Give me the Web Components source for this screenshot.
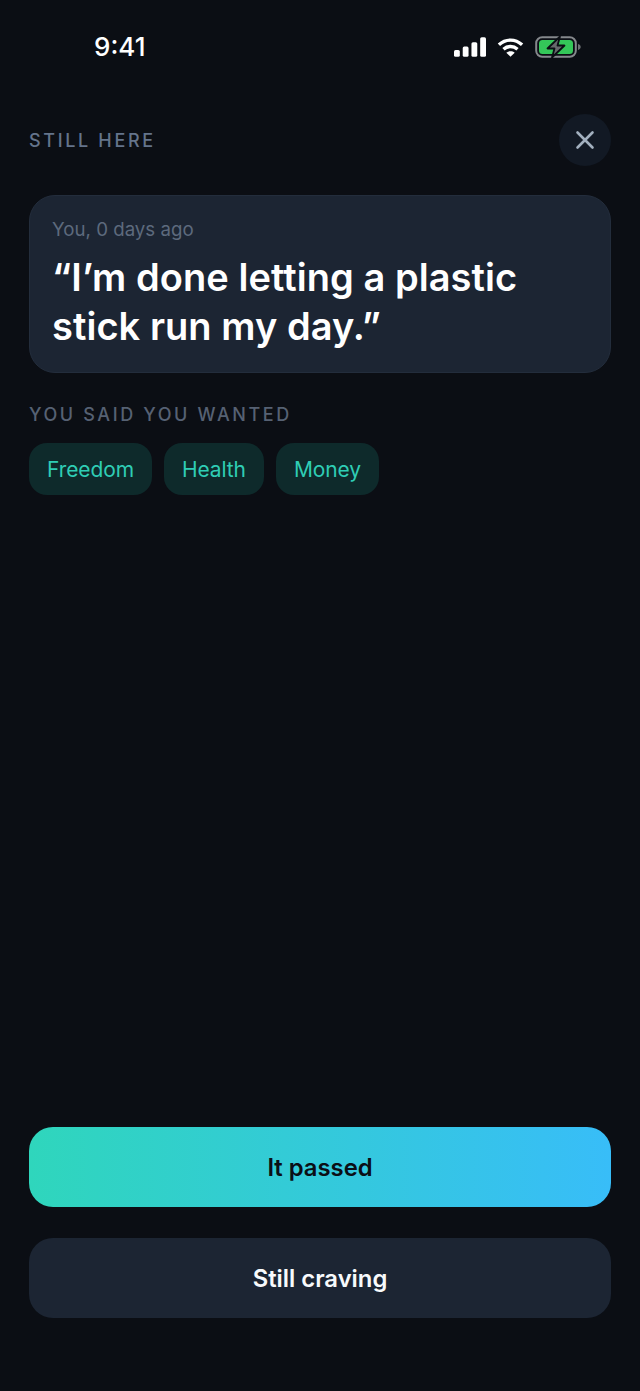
<!DOCTYPE html>
<html>
<head>
<meta charset="utf-8">
<style>
  html, body { margin: 0; height: 100%; background: #0b0e14; }
  body { font-family: Inter, "Liberation Sans", sans-serif; }
</style>
</head>
<body>
<craving-screen>
  <status-bar slot="status"></status-bar>
  <screen-header slot="header">STILL HERE</screen-header>
  <quote-card slot="content" meta="You, 0 days ago">“I’m done letting a plastic stick run my day.”</quote-card>
  <section-label slot="content">YOU SAID YOU WANTED</section-label>
  <chip-row slot="content">
    <goal-chip>Freedom</goal-chip>
    <goal-chip>Health</goal-chip>
    <goal-chip>Money</goal-chip>
  </chip-row>
  <action-button slot="actions" kind="primary">It passed</action-button>
  <action-button slot="actions">Still craving</action-button>
</craving-screen>

<script>
class CravingScreen extends HTMLElement {
  constructor() {
    super();
    this.attachShadow({ mode: 'open' }).innerHTML = `
      <style>
        :host { display: flex; flex-direction: column; height: 1391px; box-sizing: border-box; padding: 0 29px 73px; }
        .top { display: block; margin: 0 -29px; }
        main { flex: 1; display: flex; flex-direction: column; }
        .actions { display: flex; flex-direction: column; gap: 31px; }
      </style>
      <div class="top"><slot name="status"></slot></div>
      <slot name="header"></slot>
      <main><slot name="content"></slot></main>
      <div class="actions"><slot name="actions"></slot></div>`;
  }
}

class StatusBar extends HTMLElement {
  constructor() {
    super();
    this.attachShadow({ mode: 'open' }).innerHTML = `
      <style>
        :host { display: flex; align-items: center; justify-content: space-between; height: 94px; box-sizing: border-box; padding: 0 59px 0 94px; color: #fff; }
        .time { font-size: 26px; font-weight: 500; line-height: 1; }
        .icons { display: flex; align-items: center; gap: 11px; }
        svg { display: block; }
      </style>
      <span class="time">9:41</span>
      <div class="icons">
        <svg width="32" height="20" viewBox="0 0 33 20" fill="#fff">
          <rect x="0" y="13" width="6" height="7" rx="1.6"/>
          <rect x="9" y="9.5" width="6" height="10.5" rx="1.6"/>
          <rect x="18" y="5" width="6" height="15" rx="1.6"/>
          <rect x="27" y="0" width="6" height="20" rx="1.6"/>
        </svg>
        <svg width="27" height="19" viewBox="0 0 28 20" fill="none" stroke="#fff" stroke-width="3.6">
          <path d="M1.8 7.2C9 .6 19 .6 26.2 7.2"/>
          <path d="M6.6 11.8c4.4-3.8 10.400-3.800 14.800 0"/>
          <path d="M14 19.800l-4.400-4.400c2.500-2 6.300-2 8.800 0z" fill="#fff" stroke="none"/>
        </svg>
        <svg width="46" height="24" viewBox="0 0 46 24" fill="none">
          <rect x="1.200" y="2.200" width="39.600" height="19.600" rx="6" stroke="#85888c" stroke-width="2"/>
          <rect x="4" y="5" width="34" height="14" rx="3.500" fill="#34c759"/>
          <path d="M43 9v6c1.600-.4 2.700-1.600 2.700-3S44.600 9.400 43 9z" fill="#6e7175"/>
          <path d="M25 1.500L12.500 13.500h7L17 22.500 29.500 10.500h-7z" fill="#67696c" stroke="#0b0e14" stroke-width="1.800" stroke-linejoin="round"/>
        </svg>
      </div>`;
  }
}

class ScreenHeader extends HTMLElement {
  constructor() {
    super();
    this.attachShadow({ mode: 'open' }).innerHTML = `
      <style>
        :host { display: flex; align-items: center; justify-content: space-between; height: 52px; margin: 20px 0 29px; font-size: 18px; font-weight: 500; letter-spacing: 2.650px; color: #64748b; }
        .close { width: 52px; height: 52px; border-radius: 50%; background: #121924; display: flex; align-items: center; justify-content: center; }
      </style>
      <slot></slot>
      <div class="close">
        <svg width="20" height="20" viewBox="0 0 20 20" fill="none" stroke="#a3b0bf" stroke-width="2.600" stroke-linecap="round">
          <path d="M2.500 2.500l15 15M17.500 2.500l-15 15"/>
        </svg>
      </div>`;
  }
}

class QuoteCard extends HTMLElement {
  constructor() {
    super();
    this.attachShadow({ mode: 'open' }).innerHTML = `
      <style>
        :host { display: block; box-sizing: border-box; height: 178px; padding: 22px 23px 0; border: 1px solid #232d3c; border-radius: 26px; background: #1c2533; }
        .meta { font-size: 18.700px; line-height: 24px; color: #5d6a7d; margin: 0 0 11px -1px; }
        .text { font-size: 38px; font-weight: 600; line-height: 49px; letter-spacing: 0.050px; color: #fff; margin-left: -1px; }
      </style>
      <div class="meta"></div>
      <div class="text"><slot></slot></div>`;
    this.shadowRoot.querySelector('.meta').textContent = this.getAttribute('meta');
  }
}

class SectionLabel extends HTMLElement {
  constructor() {
    super();
    this.attachShadow({ mode: 'open' }).innerHTML = `
      <style>
        :host { display: block; margin-top: 31px; font-size: 18px; line-height: 22px; font-weight: 500; letter-spacing: 2.600px; color: #566173; }
      </style>
      <slot></slot>`;
  }
}

class ChipRow extends HTMLElement {
  constructor() {
    super();
    this.attachShadow({ mode: 'open' }).innerHTML = `
      <style>
        :host { display: flex; gap: 12px; margin-top: 17px; }
      </style>
      <slot></slot>`;
  }
}

class GoalChip extends HTMLElement {
  constructor() {
    super();
    this.attachShadow({ mode: 'open' }).innerHTML = `
      <style>
        :host { display: flex; align-items: center; height: 52px; box-sizing: border-box; padding: 0 18px; border-radius: 18px; background: #0e2a2b; color: #2fcdb5; font-size: 21px; letter-spacing: -0.100px; }
      </style>
      <slot></slot>`;
  }
}

class ActionButton extends HTMLElement {
  constructor() {
    super();
    this.attachShadow({ mode: 'open' }).innerHTML = `
      <style>
        :host { display: flex; align-items: center; justify-content: center; height: 80px; border-radius: 24px; background: #1c2533; color: #f8fafc; font-size: 23.800px; font-weight: 600; }
        :host([kind="primary"]) { background: linear-gradient(90deg, #2fd6bc, #38bdf8); color: #0b0f16; }
      </style>
      <slot></slot>`;
  }
}

customElements.define('craving-screen', CravingScreen);
customElements.define('status-bar', StatusBar);
customElements.define('screen-header', ScreenHeader);
customElements.define('quote-card', QuoteCard);
customElements.define('section-label', SectionLabel);
customElements.define('chip-row', ChipRow);
customElements.define('goal-chip', GoalChip);
customElements.define('action-button', ActionButton);
</script>
</body>
</html>
